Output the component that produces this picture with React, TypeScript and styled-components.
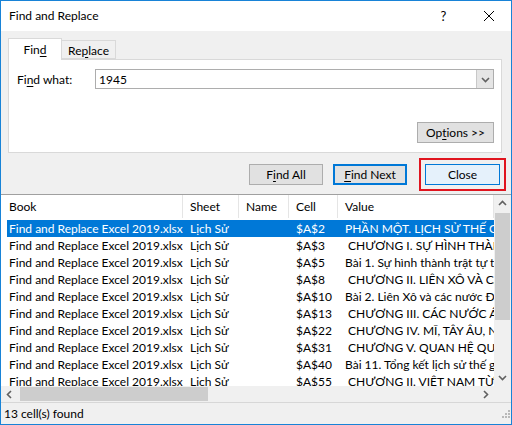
import React from "react"
import styled, { createGlobalStyle } from "styled-components"

const GlobalStyle = createGlobalStyle`
  html, body {
    margin: 0;
    padding: 0;
    background: #ffffff;
  }
  * {
    box-sizing: border-box;
  }
`

type Result = {
  cell: string
  value: string
}

const results: Result[] = [
  { cell: "$A$2", value: "PHẦN MỘT. LỊCH SỬ THẾ GIỚI HIỆN ĐẠI" },
  { cell: "$A$3", value: " CHƯƠNG I. SỰ HÌNH THÀNH TRẬT TỰ" },
  { cell: "$A$5", value: "Bài 1. Sự hình thành trật tự thế giới" },
  { cell: "$A$8", value: " CHƯƠNG II. LIÊN XÔ VÀ CÁC NƯỚC" },
  { cell: "$A$10", value: "Bài 2. Liên Xô và các nước Đông Âu" },
  { cell: "$A$13", value: " CHƯƠNG III. CÁC NƯỚC Á, PHI VÀ" },
  { cell: "$A$22", value: " CHƯƠNG IV. MĨ, TÂY ÂU, NHẬT BẢN" },
  { cell: "$A$31", value: " CHƯƠNG V. QUAN HỆ QUỐC TẾ" },
  { cell: "$A$40", value: "Bài 11. Tổng kết lịch sử thế giới" },
  { cell: "$A$55", value: " CHƯƠNG II. VIỆT NAM TỪ NĂM 1945" },
]

const Window = styled.div`
  width: 512px;
  height: 425px;
  border: 1px solid #1883d7;
  display: flex;
  flex-direction: column;
  font-family: Lato, "Noto Sans", sans-serif;
  font-size: 12px;
  color: #000;
  background: #f0f0f0;
  overflow: hidden;
`

const TitleBar = styled.div`
  height: 30px;
  background: #fff;
  display: flex;
  align-items: center;
  padding-left: 8px;
  flex-shrink: 0;
`

const Title = styled.div`
  flex: 1;
  font-size: 12px;
  padding-bottom: 1px;
`

const TitleButton = styled.div`
  width: 45px;
  height: 30px;
  display: flex;
  align-items: center;
  justify-content: center;
  font-size: 13px;
`

const TopArea = styled.div`
  height: 163px;
  flex-shrink: 0;
  padding: 7px 9px 0 7px;
  display: flex;
  flex-direction: column;
`

const TabStrip = styled.div`
  display: flex;
  align-items: flex-end;
  height: 22px;
  position: relative;
  z-index: 1;
`

const Tab = styled.div<{ $active?: boolean }>`
  width: 54px;
  height: ${(p) => (p.$active ? "22px" : "19px")};
  background: ${(p) => (p.$active ? "#fff" : "#f0f0f0")};
  border: 1px solid #d9d9d9;
  border-bottom: ${(p) => (p.$active ? "none" : "1px solid #d9d9d9")};
  border-left: ${(p) => (p.$active ? "1px solid #d9d9d9" : "none")};
  display: flex;
  align-items: center;
  justify-content: center;
  padding-top: ${(p) => (p.$active ? "0" : "1px")};
  margin-bottom: ${(p) => (p.$active ? "0" : "1px")};
`

const Panel = styled.div`
  height: 94px;
  margin-top: -1px;
  background: #fff;
  border: 1px solid #d9d9d9;
  display: flex;
  flex-direction: column;
  padding: 9px 7px 0 7px;
`

const FieldRow = styled.div`
  display: flex;
  align-items: center;
  height: 20px;
`

const FieldLabel = styled.div`
  width: 79px;
  padding-left: 1px;
`

const Combo = styled.div`
  flex: 1;
  height: 20px;
  border: 1px solid #adadad;
  display: flex;
  align-items: center;
`

const ComboText = styled.div`
  flex: 1;
  padding-left: 3px;
`

const ComboDrop = styled.div`
  width: 17px;
  height: 18px;
  background: #e5e5e5;
  border-left: 1px solid #c8c8c8;
  display: flex;
  align-items: center;
  justify-content: center;
`

const OptionsRow = styled.div`
  display: flex;
  justify-content: flex-end;
  margin-top: 33px;
`

const Button = styled.div<{ $width: number; $variant?: "default" | "focus" | "primary" }>`
  width: ${(p) => p.$width}px;
  height: 21px;
  display: flex;
  align-items: center;
  justify-content: center;
  background: ${(p) => (p.$variant === "primary" ? "#e5f1fb" : "#e1e1e1")};
  border: ${(p) =>
    p.$variant === "focus"
      ? "2px solid #0078d7"
      : p.$variant === "primary"
      ? "1px solid #0078d7"
      : "1px solid #adadad"};
`

const ActionRow = styled.div`
  display: flex;
  align-items: center;
  justify-content: flex-end;
  margin-top: 4px;
  height: 34px;
  margin-right: -7px;
`

const Spacer = styled.div<{ $w: number }>`
  width: ${(p) => p.$w}px;
  flex-shrink: 0;
`

const Highlight = styled.div`
  border: 2px solid #e0141e;
  padding: 4px;
  display: flex;
`

const Underline = styled.span`
  text-decoration: underline;
  text-underline-offset: 2px;
`

const ListArea = styled.div`
  height: 208px;
  flex-shrink: 0;
  background: #fff;
  border-top: 1px solid #a0a0a0;
  display: grid;
  grid-template-columns: minmax(0, 1fr) 17px;
  grid-template-rows: minmax(0, 1fr) 16px;
`

const ListBody = styled.div`
  overflow: hidden;
  display: flex;
  flex-direction: column;
  min-width: 0;
`

const HeaderRow = styled.div`
  display: grid;
  grid-template-columns: 182px 56px 50px 49px minmax(0, 1fr);
  height: 23px;
  flex-shrink: 0;
`

const HeaderCell = styled.div<{ $first?: boolean }>`
  display: flex;
  align-items: center;
  padding-left: ${(p) => (p.$first ? "8px" : "7px")};
  border-right: 1px solid #e5e5e5;
  padding-bottom: 1px;
`

const Rows = styled.div`
  margin-top: 2px;
  display: flex;
  flex-direction: column;
`

const Row = styled.div<{ $selected?: boolean }>`
  display: grid;
  grid-template-columns: 176px 56px 50px 49px minmax(0, 1fr);
  margin-left: 6px;
  height: 17px;
  flex-shrink: 0;
  background: ${(p) => (p.$selected ? "#0078d7" : "transparent")};
  color: ${(p) => (p.$selected ? "#fff" : "#000")};
`

const Cell = styled.div<{ $first?: boolean }>`
  padding-left: ${(p) => (p.$first ? "2px" : "7px")};
  white-space: pre;
  overflow: hidden;
  line-height: 17px;
  min-width: 0;
`

const VScroll = styled.div`
  background: #f0f0f0;
  display: flex;
  flex-direction: column;
  align-items: center;
`

const HScroll = styled.div`
  background: #f0f0f0;
  display: flex;
  align-items: center;
`

const Corner = styled.div`
  background: #f0f0f0;
`

const ArrowBox = styled.div`
  width: 17px;
  height: 17px;
  display: flex;
  align-items: center;
  justify-content: center;
  flex-shrink: 0;
`

const VThumb = styled.div`
  width: 15px;
  height: 107px;
  background: #cdcdcd;
  margin-top: 1px;
`

const HThumb = styled.div`
  width: 188px;
  height: 14px;
  background: #cdcdcd;
  margin-left: 2px;
`

const Fill = styled.div`
  flex: 1;
`

const StatusBar = styled.div`
  flex: 1;
  border-top: 1px solid #d7d7d7;
  display: flex;
  align-items: center;
  justify-content: space-between;
  padding-left: 3px;
  padding-bottom: 1px;
`

const Chevron = ({ dir }: { dir: "up" | "down" | "left" | "right" }) => {
  const d = {
    up: "M1 6 L4.5 2.5 L8 6",
    down: "M1 3 L4.5 6.5 L8 3",
    left: "M6 1 L2.5 4.5 L6 8",
    right: "M3 1 L6.5 4.5 L3 8",
  }[dir]
  return (
    <svg width="9" height="9" viewBox="0 0 9 9">
      <path d={d} fill="none" stroke="#606060" strokeWidth="1.6" />
    </svg>
  )
}

const Grip = () => (
  <svg width="12" height="12" viewBox="0 0 12 12">
    {[
      [9, 3],
      [6, 6],
      [9, 6],
      [3, 9],
      [6, 9],
      [9, 9],
    ].map(([x, y]) => (
      <rect key={`${x}-${y}`} x={x} y={y} width="2" height="2" fill="#b8b8b8" />
    ))}
  </svg>
)

const App = () => {
  return (
    <>
      <GlobalStyle />
      <Window>
        <TitleBar>
          <Title>Find and Replace</Title>
          <TitleButton>?</TitleButton>
          <TitleButton>
            <svg width="12" height="12" viewBox="0 0 12 12">
              <path d="M1 1 L11 11 M11 1 L1 11" stroke="#000" strokeWidth="1" />
            </svg>
          </TitleButton>
        </TitleBar>

        <TopArea>
          <TabStrip>
            <Tab $active>
              Fin<Underline>d</Underline>
            </Tab>
            <Tab>
              Re<Underline>p</Underline>lace
            </Tab>
          </TabStrip>
          <Panel>
            <FieldRow>
              <FieldLabel>
                Fi<Underline>n</Underline>d what:
              </FieldLabel>
              <Combo>
                <ComboText>1945</ComboText>
                <ComboDrop>
                  <Chevron dir="down" />
                </ComboDrop>
              </Combo>
            </FieldRow>
            <OptionsRow>
              <Button $width={77}>
                Op<Underline>t</Underline>ions &gt;&gt;
              </Button>
            </OptionsRow>
          </Panel>
          <ActionRow>
            <Button $width={74}>
              F<Underline>i</Underline>nd All
            </Button>
            <Spacer $w={10} />
            <Button $width={74} $variant="focus">
              <Underline>F</Underline>ind Next
            </Button>
            <Spacer $w={12} />
            <Highlight>
              <Button $width={75} $variant="primary">
                Close
              </Button>
            </Highlight>
            <Spacer $w={3} />
          </ActionRow>
        </TopArea>

        <ListArea>
          <ListBody>
            <HeaderRow>
              <HeaderCell $first>Book</HeaderCell>
              <HeaderCell>Sheet</HeaderCell>
              <HeaderCell>Name</HeaderCell>
              <HeaderCell>Cell</HeaderCell>
              <HeaderCell>Value</HeaderCell>
            </HeaderRow>
            <Rows>
              {results.map((r, i) => (
                <Row key={r.cell} $selected={i === 0}>
                  <Cell $first>Find and Replace Excel 2019.xlsx</Cell>
                  <Cell>Lịch Sử</Cell>
                  <Cell></Cell>
                  <Cell>{r.cell}</Cell>
                  <Cell>{r.value}</Cell>
                </Row>
              ))}
            </Rows>
          </ListBody>
          <VScroll>
            <ArrowBox>
              <Chevron dir="up" />
            </ArrowBox>
            <VThumb />
            <Fill />
            <ArrowBox>
              <Chevron dir="down" />
            </ArrowBox>
          </VScroll>
          <HScroll>
            <ArrowBox>
              <Chevron dir="left" />
            </ArrowBox>
            <HThumb />
            <Fill />
            <ArrowBox>
              <Chevron dir="right" />
            </ArrowBox>
          </HScroll>
          <Corner />
        </ListArea>

        <StatusBar>
          <span>13 cell(s) found</span>
          <Grip />
        </StatusBar>
      </Window>
    </>
  )
}

export default App
